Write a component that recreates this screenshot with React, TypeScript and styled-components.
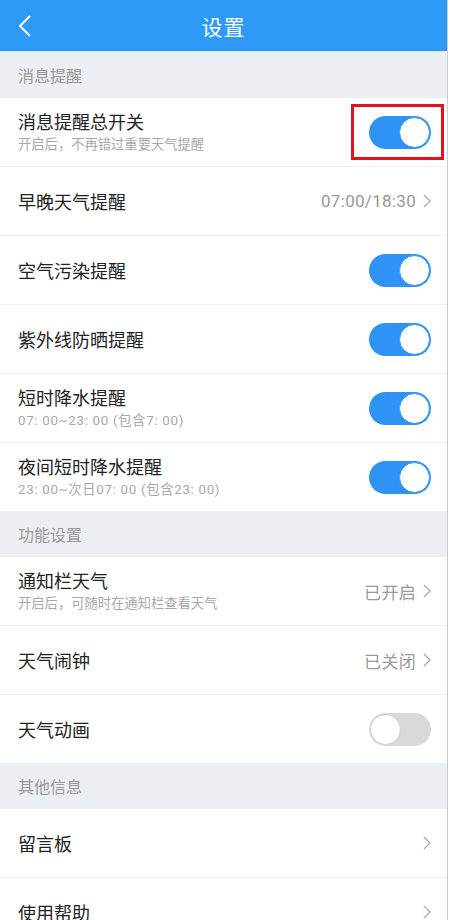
import React from "react";
import styled, { createGlobalStyle } from "styled-components";

const GlobalStyle = createGlobalStyle`
  html, body {
    margin: 0;
    padding: 0;
    background: #fff;
  }
  body {
    font-family: "Noto Sans CJK SC", "Noto Sans", sans-serif;
  }
`;

const Screen = styled.div`
  width: 447px;
  min-height: 920px;
  background: #fff;
  border-right: 1px solid #c9ccd1;
  overflow: hidden;
`;

const Header = styled.div`
  height: 51px;
  background: #2d9af8;
  border-bottom: 1px solid #d6e6f7;
  display: flex;
  align-items: center;
  justify-content: center;
  position: relative;
`;

const BackButton = styled.div`
  position: absolute;
  left: 18px;
  top: 15px;
  width: 14px;
  height: 22px;
  display: flex;
`;

const Title = styled.div`
  color: #fff;
  font-size: 21px;
  letter-spacing: 1px;
`;

const SectionHeader = styled.div`
  height: 46px;
  background: #ebeef3;
  color: #9a9a9a;
  font-size: 16px;
  display: flex;
  align-items: center;
  padding-left: 18px;
`;

const Row = styled.div<{ $last?: boolean }>`
  height: 68px;
  display: flex;
  align-items: center;
  justify-content: space-between;
  padding: 0 16px 0 18px;
  border-bottom: ${(p) => (p.$last ? "none" : "1px solid #eeeeee")};
  position: relative;
`;

const TextBlock = styled.div`
  display: flex;
  flex-direction: column;
  gap: 2px;
`;

const RowTitle = styled.div`
  font-size: 18px;
  color: #222;
  line-height: 24px;
`;

const RowSub = styled.div<{ $numeric?: boolean }>`
  font-family: "Roboto", "Noto Sans CJK SC", sans-serif;
  font-size: 13.3px;
  color: #a8a8a8;
  line-height: 20px;
  white-space: pre;
  letter-spacing: ${(p) => (p.$numeric ? "0.7px" : "0")};
`;

const Value = styled.div`
  display: flex;
  align-items: center;
  gap: 7px;
  font-family: "Roboto", "Noto Sans CJK SC", sans-serif;
  font-size: 17px;
  letter-spacing: 0.3px;
  color: #999;
`;

const Toggle = styled.div<{ $on: boolean }>`
  width: 62px;
  height: 33px;
  border-radius: 17px;
  box-sizing: border-box;
  background: ${(p) => (p.$on ? "#2f93f5" : "#d9d9d9")};
  display: flex;
  align-items: center;
  justify-content: ${(p) => (p.$on ? "flex-end" : "flex-start")};
  padding: 1px;
`;

const Knob = styled.div<{ $on: boolean }>`
  width: 31px;
  height: 31px;
  border-radius: 50%;
  box-sizing: border-box;
  background: #fff;
  border: 1px solid ${(p) => (p.$on ? "#2f93f5" : "#d0d0d0")};
`;

const Highlight = styled.div`
  position: absolute;
  right: 3px;
  top: 6px;
  width: 87px;
  height: 50px;
  border: 3px solid #e8101c;
`;

const Chevron = () => (
  <svg width="8" height="14" viewBox="0 0 8 14">
    <polyline points="1,1 7,7 1,13" fill="none" stroke="#aaa" strokeWidth="1.3" />
  </svg>
);

type Item = {
  title: string;
  sub?: string;
  numeric?: boolean;
  toggle?: boolean;
  value?: string;
  chevron?: boolean;
  highlight?: boolean;
};

const sections: { name: string; items: Item[] }[] = [
  {
    name: "消息提醒",
    items: [
      { title: "消息提醒总开关", sub: "开启后，不再错过重要天气提醒", toggle: true, highlight: true },
      { title: "早晚天气提醒", value: "07:00/18:30", chevron: true },
      { title: "空气污染提醒", toggle: true },
      { title: "紫外线防晒提醒", toggle: true },
      { title: "短时降水提醒", sub: "07: 00~23: 00 (包含7: 00)", numeric: true, toggle: true },
      { title: "夜间短时降水提醒", sub: "23: 00~次日07: 00 (包含23: 00)", numeric: true, toggle: true },
    ],
  },
  {
    name: "功能设置",
    items: [
      { title: "通知栏天气", sub: "开启后，可随时在通知栏查看天气", value: "已开启", chevron: true },
      { title: "天气闹钟", value: "已关闭", chevron: true },
      { title: "天气动画", toggle: false },
    ],
  },
  {
    name: "其他信息",
    items: [
      { title: "留言板", chevron: true },
      { title: "使用帮助", chevron: true },
    ],
  },
];

export default function App() {
  return (
    <>
      <GlobalStyle />
      <Screen>
        <Header>
          <BackButton>
            <svg width="14" height="22" viewBox="0 0 14 22">
              <polyline points="12,1 2,11 12,21" fill="none" stroke="#fff" strokeWidth="2" />
            </svg>
          </BackButton>
          <Title>设置</Title>
        </Header>
        {sections.map((s) => (
          <div key={s.name}>
            <SectionHeader>{s.name}</SectionHeader>
            {s.items.map((it, i) => (
              <Row key={it.title} $last={i === s.items.length - 1}>
                <TextBlock>
                  <RowTitle>{it.title}</RowTitle>
                  {it.sub && <RowSub $numeric={it.numeric}>{it.sub}</RowSub>}
                </TextBlock>
                {it.toggle !== undefined && (
                  <Toggle $on={it.toggle}>
                    <Knob $on={it.toggle} />
                  </Toggle>
                )}
                {it.chevron && (
                  <Value>
                    {it.value}
                    <Chevron />
                  </Value>
                )}
                {it.highlight && <Highlight />}
              </Row>
            ))}
          </div>
        ))}
      </Screen>
    </>
  );
}
